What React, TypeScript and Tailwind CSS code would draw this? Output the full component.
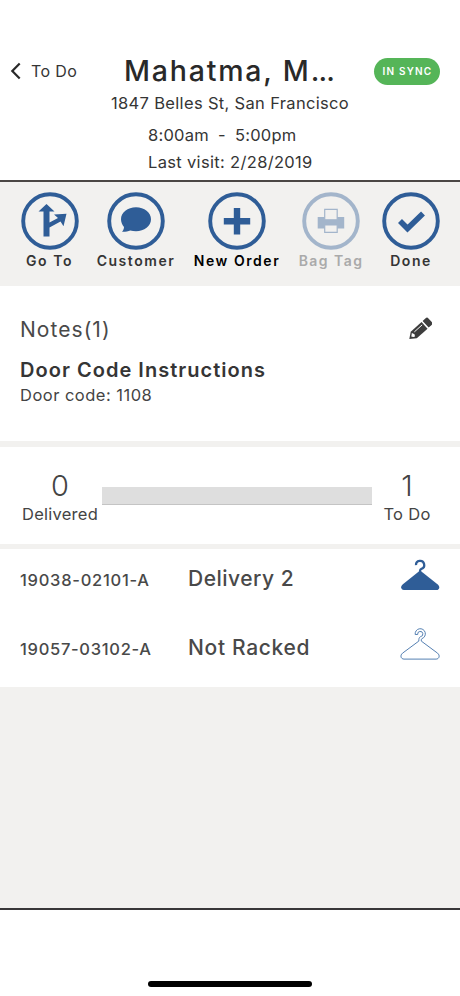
import type { ReactNode } from "react";

const BLUE = "#2f5d97";

function Action({ label, className, faded, labelClass, children }: { label: string; className: string; faded?: boolean; labelClass: string; children: ReactNode }) {
  return (
    <button className={`flex shrink-0 flex-col items-center ${className}`}>
      <svg width="58" height="58" viewBox="0 0 58 58" className={faded ? "opacity-40" : ""}>
        <circle cx="29" cy="29" r="26.8" fill="none" stroke={BLUE} strokeWidth="3.9" />
        {children}
      </svg>
      <span className={`mt-0.5 h-[18px] text-sm leading-[18px] font-semibold whitespace-nowrap ${labelClass}`}>{label}</span>
    </button>
  );
}

function Pencil() {
  return (
    <svg width="24" height="24" viewBox="0 0 24 24" className="mb-[2px]">
      <g transform="translate(1.300 22) rotate(-42)">
        <path d="M0 0 6-4.500H20.500V4.500H6z" fill="#3d3d3d" />
        <path d="M22-4.500h4a2 2 0 0 1 2 2v5a2 2 0 0 1-2 2H22z" fill="#3d3d3d" />
        <path d="M3.200-.6 6-2.800 7 0 6 1.900 4.300 1.300z" fill="#fff" />
        <path d="M8.500-1.900h10.500" stroke="#fff" strokeWidth="0.900" />
      </g>
    </svg>
  );
}

function Hanger({ filled }: { filled?: boolean }) {
  return filled ? (
    <svg width="40" height="32" viewBox="0 0 40 32" className="shrink-0">
      <path d="M16 6.100a4.100 4.100 0 1 1 5.400 3.700c-1 .4-1.300 1-1.300 2v2" fill="none" stroke={BLUE} strokeWidth="2.300" />
      <path d="M18.800 12.600h2.600L37.800 25.500c2.600 2.300 1.500 5.500-1.300 5.500H4C1.200 31 0 27.800 2.600 25.500z" fill={BLUE} />
    </svg>
  ) : (
    <svg width="40" height="32" viewBox="0 0 40 32" fill="none" stroke="#5580b2" strokeWidth="1" className="shrink-0">
      <path d="M15.200 6.500A5.100 5.100 0 1 1 22 10.600c-.7.400-.7.800-.7 2.500L37.600 25.200c2.800 2.400 1.500 5.900-1.500 5.900H4c-3 0-4.300-3.500-1.500-5.900l16.300-12.100c0-2.400.2-3.600 1.800-4.500A2.600 2.600 0 1 0 17.700 6.500z" />
    </svg>
  );
}

export default function App() {
  return (
    <main className="flex h-[996px] w-[460px] flex-col overflow-hidden bg-[#f2f1ef] font-['Inter',sans-serif] text-[#353535]">
      <header className="h-[182px] border-b-2 border-[#4b4745] bg-white pt-[52px]">
        <div className="flex h-[38px] items-center">
          <svg width="12" height="18" viewBox="0 0 12 18" className="ml-[10px]" fill="none" stroke="#292929" strokeWidth="2.200">
            <path d="M9.700 1.500 2.300 9l7.400 7.500" />
          </svg>
          <span className="ml-[9px] w-[93px] text-[16px] tracking-[0.4px] whitespace-nowrap">To Do</span>
          <h1 className="-mt-px w-[250px] text-[28.500px] leading-9 font-medium tracking-[1.800px] whitespace-nowrap text-[#292929]">
            Mahatma, M<span className="tracking-[-0.900px]">...</span>
          </h1>
          <span className="flex h-[27px] w-[66px] shrink-0 items-center justify-center rounded-full bg-[#55b558] pl-px text-[10px] font-semibold tracking-[1.200px] whitespace-nowrap text-white">IN SYNC</span>
        </div>
        <p className="ml-[111px] h-[27px] text-[16.500px] leading-[27px] tracking-[0.330px] whitespace-nowrap">1847 Belles St, San Francisco</p>
        <p className="mt-[5px] ml-[148px] h-[27px] text-[16.500px] leading-[27px] tracking-[0.230px] [word-spacing:-0.300px] whitespace-pre">8:00am  -  5:00pm</p>
        <p className="ml-[148px] h-[27px] text-[16.500px] leading-[27px] tracking-[0.330px] whitespace-nowrap">Last visit: 2/28/2019</p>
      </header>

      <nav className="flex h-[104px] shrink-0 items-start pt-[10px] pl-[10px]">
        <Action label="Go To" className="w-[79px]" labelClass="tracking-[1.550px]">
          <path d="M22.500 44.500V19.500h-5L25.500 12l8 7.500h-5V30.500l8.500-4.500-4-3.500 12.500-.8-3 12.500-3-4.700-11 6V44.500z" fill={BLUE} />
        </Action>
        <Action label="Customer" className="w-[94px]" labelClass="tracking-[1.550px]">
          <path d="M29 15.200c8.300 0 15 5.200 15 12s-6.700 12-15 12c-2 0-3.900-.3-5.700-.8-2.300 1-5 1.400-8.300 1.300 1.300-1.500 2-3 2-4.800-1.900-2.200-3-4.800-3-7.700 0-6.800 6.700-12 15-12z" fill={BLUE} />
        </Action>
        <Action label="New Order" className="ml-px w-[106px]" labelClass="text-black tracking-[1.550px]">
          <path d="M25.800 16h6.400v10h10v6.400h-10v10h-6.400v-10h-10V26h10z" fill={BLUE} />
        </Action>
        <Action label="Bag Tag" className="w-[82px]" faded labelClass="text-[#aaa] tracking-[1.450px]">
          <path d="M15.700 25h26.500v11.500H15.700z" fill={BLUE} />
          <path d="M22.700 17.300h12.500v10.500H22.700zM22.700 33h12.500v7.300H22.700z" fill="#f2f1ef" stroke={BLUE} strokeWidth="1.200" />
        </Action>
        <Action label="Done" className="w-[78px]" labelClass="tracking-[1.550px]">
          <path d="m18 29 7.500 7.500L41 21.500" fill="none" stroke={BLUE} strokeWidth="5.600" />
        </Action>
      </nav>

      <section className="h-[155px] shrink-0 bg-white pt-[28px] pl-[20px]">
        <div className="flex h-[32px] items-center justify-between pr-[28px]">
          <h2 className="text-[21px] tracking-[1.050px] text-[#494949]">Notes(1)</h2>
          <Pencil />
        </div>
        <h3 className="mt-[10px] h-[28px] text-[20px] leading-[28px] font-semibold tracking-[1.030px] whitespace-nowrap">Door Code Instructions</h3>
        <p className="-mt-px h-[24px] text-[16.500px] leading-[24px] tracking-[0.480px] whitespace-nowrap text-[#444]">Door code: 1108</p>
      </section>

      <section className="mt-[6px] flex h-[97px] shrink-0 items-start bg-white pt-[20px] pl-[20px] text-[#444]">
        <div className="flex w-[82px] flex-col items-center pr-[2px]">
          <span className="h-[38px] text-[29px] leading-[38px] font-[350]">0</span>
          <span className="h-[18px] text-[16.500px] leading-[18px] tracking-[0.250px]">Delivered</span>
        </div>
        <div className="mt-[20px] h-[18px] w-[270px] border-b border-[#c4c4c4] bg-[#dedede]" />
        <div className="flex w-[70px] flex-col items-center">
          <span className="h-[38px] text-[29px] leading-[38px] font-[350]">1</span>
          <span className="h-[18px] text-[16.500px] leading-[18px] tracking-[0.300px]">To Do</span>
        </div>
      </section>

      <section className="mt-[5px] h-[138px] shrink-0 bg-white pr-[20px] pl-[20px] text-[#494949]">
        <div className="flex h-[69px] items-start pt-[10px]">
          <span className="w-[168px] pt-[1px] text-[16.500px] leading-[40px] font-medium tracking-[0.740px]">19038-02101-A</span>
          <span className="flex-1 text-[21px] leading-[40px] font-medium tracking-[0.500px]">Delivery 2</span>
          <Hanger filled />
        </div>
        <div className="flex h-[69px] items-start pt-[10px]">
          <span className="w-[168px] pt-[1px] text-[16.500px] leading-[40px] font-medium tracking-[0.700px]">19057-03102-A</span>
          <span className="flex-1 text-[21px] leading-[40px] font-medium tracking-[0.670px]">Not Racked</span>
          <Hanger />
        </div>
      </section>

      <footer className="mt-auto flex h-[88px] shrink-0 items-end justify-center border-t-2 border-[#393739] bg-white pb-[9px]">
        <div className="h-[6px] w-[164px] rounded-full bg-black" />
      </footer>
    </main>
  );
}
